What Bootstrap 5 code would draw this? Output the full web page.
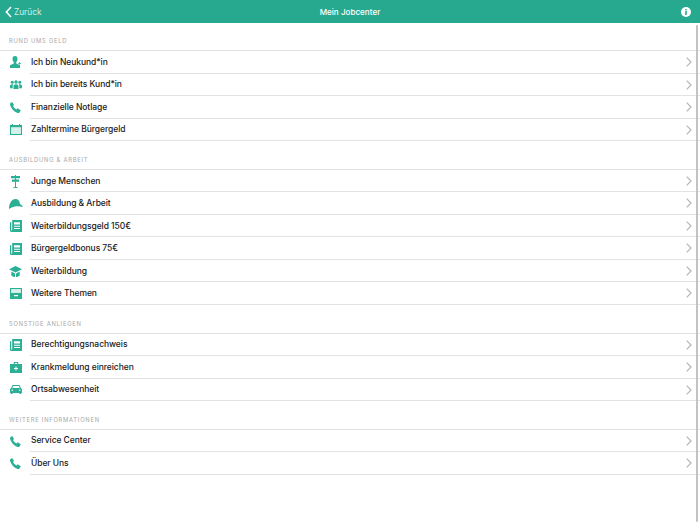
<!DOCTYPE html>
<html lang="de">
<head>
<meta charset="utf-8">
<title>Mein Jobcenter</title>
<link href="https://cdn.jsdelivr.net/npm/bootstrap@5.3.0/dist/css/bootstrap.min.css" rel="stylesheet">
<style>
html,body{height:100%;overflow:hidden;background:#fff}
body{font-family:Inter,"Liberation Sans",sans-serif;color:#222}
.appbar{height:23px;background:#26a98f;color:#fff}
.appbar svg{display:block}
.back-link{color:#d5efe9;font-size:8.3px;gap:2px;padding-left:5px;text-decoration:none}
.bar-title{color:#fff;font-size:8.1px;padding-top:1px;font-weight:500}
.back-text{padding-top:1px}
.bar-side{width:100px}
.info-side{padding-right:9px}
.app-body{height:502px;overflow:hidden}
.scroll-thumb{position:absolute;right:2px;top:2px;width:2px;height:497px;background:#c2c2c2;border-radius:1px}
.sect-head{height:27.7px;padding:0 0 4.100px 9px;font-size:5.800px;letter-spacing:.75px;color:#a8a8a8;text-transform:uppercase;display:flex;align-items:flex-end}
.sect-first{height:27.200px}
.rows{border-top:1px solid #e2e2e2}
.menu-row{height:22.5px;font-size:8.5px;color:#1a1a1a;text-decoration:none;display:flex;align-items:center;font-weight:500;letter-spacing:-.06px}
.row-icon{width:30px;flex:none;display:flex;justify-content:center;padding-left:1px}
.row-body{flex:1;height:100%;display:flex;align-items:center;justify-content:space-between;border-bottom:1px solid #e2e2e2;padding:.6px 8px 0 1px;min-width:0}
.row-icon svg{fill:#2bb096;display:block}
.chev{fill:none;stroke:#b5b5b5;stroke-width:1.2}
</style>
</head>
<body>
<svg width="0" height="0" class="position-absolute">
  <defs>
    <symbol id="ic-phone" viewBox="0 0 11 11"><path d="M.3 1.300 2.100 0l2 3-1.100 1c.7 1.500 2 2.800 3.500 3.400l1-1.100 3.300 2-1.300 2.100C9 11 8 11.100 7 10.700 3.700 9.500 1.200 6.500.2 3.300 0 2.500 0 1.900.3 1.300z"/></symbol>
    <symbol id="ic-doc" viewBox="0 0 12 12"><path fill-rule="evenodd" d="M2.200 0H12v12H1.200C.5 12 0 11.500 0 10.800V2.200h1.200v8.300h1zM4 2.200v2.400h6V2.200zM4 5.800v.9h6v-.9zM4 8v.9h6V8z"/></symbol>
    <symbol id="ic-chev" viewBox="0 0 6 10"><path class="chev" d="M.7.7 5 5 .7 9.300"/></symbol>
  </defs>
</svg>
<div class="appbar d-flex align-items-center justify-content-between">
  <a class="back-link bar-side d-flex align-items-center" href="#"><svg width="7" height="12" viewBox="0 0 7 12"><path d="M6 1 1.400 6 6 11" fill="none" stroke="#fff" stroke-width="1.600"/></svg><span class="back-text">Zurück</span></a>
  <div class="bar-title">Mein Jobcenter</div>
  <div class="bar-side info-side d-flex justify-content-end"><svg width="10" height="10" viewBox="0 0 10 10"><circle cx="5" cy="5" r="5" fill="#fff"/><path d="M4.200 2h1.600v1.300H4.200zM4.200 4.100h1.600v4H4.200z" fill="#26a98f"/></svg></div>
</div>
<div class="app-body position-relative">
<div class="scroll-thumb"></div>

<div class="sect-head sect-first">Rund ums Geld</div>
<div class="rows">
  <a class="menu-row" href="#"><span class="row-icon"><svg width="11" height="12" viewBox="0 0 11 12"><path d="M5 0C3.200 0 2.500 1.300 2.500 2.900c0 1.400.7 2.600 1.300 3.200v1.300L0 9.200V12h10V9.200L6.200 7.400V6.100C6.800 5.500 7.500 4.300 7.500 2.900 7.500 1.300 6.800 0 5 0z"/><path d="M9.300 6h.7v1h1v.7h-1v1h-.7v-1h-1V7h1z"/></svg></span><span class="row-body"><span>Ich bin Neukund*in</span><svg width="6" height="10"><use href="#ic-chev"/></svg></span></a>
  <a class="menu-row" href="#"><span class="row-icon"><svg width="12" height="9" viewBox="0 0 12 9"><circle cx="6" cy="2" r="1.700"/><circle cx="2.200" cy="2.300" r="1.500"/><circle cx="9.800" cy="2.300" r="1.500"/><path d="M3.500 9V6.200C3.500 5 4.500 4.200 6 4.200S8.500 5 8.500 6.200V9zM0 8.200V6C0 4.900 1 4.200 2.200 4.200c.4 0 .7 0 1 .2-.3.500-.5 1-.5 1.700v2.100zM12 8.200V6c0-1.100-1-1.800-2.200-1.800-.4 0-.7 0-1 .2.300.5.500 1 .5 1.700v2.100z"/></svg></span><span class="row-body"><span>Ich bin bereits Kund*in</span><svg width="6" height="10"><use href="#ic-chev"/></svg></span></a>
  <a class="menu-row" href="#"><span class="row-icon"><svg width="11" height="11"><use href="#ic-phone"/></svg></span><span class="row-body"><span>Finanzielle Notlage</span><svg width="6" height="10"><use href="#ic-chev"/></svg></span></a>
  <a class="menu-row" href="#"><span class="row-icon"><svg width="12" height="11" viewBox="0 0 12 11"><path fill-rule="evenodd" d="M0 1h2V0h1v1h6V0h1v1h2v10H0zM1.300 3.400V9.700h9.400V3.400z"/><rect x="1.300" y="3.400" width="9.400" height="6.300" fill="#d6f0ea"/></svg></span><span class="row-body"><span>Zahltermine Bürgergeld</span><svg width="6" height="10"><use href="#ic-chev"/></svg></span></a>
</div>

<div class="sect-head">Ausbildung &amp; Arbeit</div>
<div class="rows">
  <a class="menu-row" href="#"><span class="row-icon"><svg width="9" height="13" viewBox="0 0 9 13"><path d="M0 1h9v2.300H0zM1 4.500h7v2.300H1zM4 0h1v1H4zM4 3.300h1v1.200H4zM4 6.800h1v5.400H4zM2.500 12h4v1h-4z"/></svg></span><span class="row-body"><span>Junge Menschen</span><svg width="6" height="10"><use href="#ic-chev"/></svg></span></a>
  <a class="menu-row" href="#"><span class="row-icon"><svg width="14" height="10" viewBox="0 0 14 10"><path d="M0 10C0 4.500 2.500 0 6.500 0 9 0 10.500 1.800 11 5c1.200.5 2.300 1.500 3 3-3-.8-6-.9-8-.4C3.500 8.100 1.500 9 0 10z"/></svg></span><span class="row-body"><span>Ausbildung &amp; Arbeit</span><svg width="6" height="10"><use href="#ic-chev"/></svg></span></a>
  <a class="menu-row" href="#"><span class="row-icon"><svg width="12" height="12"><use href="#ic-doc"/></svg></span><span class="row-body"><span>Weiterbildungsgeld 150€</span><svg width="6" height="10"><use href="#ic-chev"/></svg></span></a>
  <a class="menu-row" href="#"><span class="row-icon"><svg width="12" height="12"><use href="#ic-doc"/></svg></span><span class="row-body"><span>Bürgergeldbonus 75€</span><svg width="6" height="10"><use href="#ic-chev"/></svg></span></a>
  <a class="menu-row" href="#"><span class="row-icon"><svg width="13" height="11" viewBox="0 0 13 11"><path d="M6.500 0 13 3.200 6.500 6.400 0 3.200z"/><path d="M2.300 5.600 6 7.400V11C4.500 10.800 3.100 10.200 2.300 9.400zM10.700 5.600 7 7.400V11c1.500-.2 2.900-.8 3.700-1.600z"/></svg></span><span class="row-body"><span>Weiterbildung</span><svg width="6" height="10"><use href="#ic-chev"/></svg></span></a>
  <a class="menu-row" href="#"><span class="row-icon"><svg width="12" height="11" viewBox="0 0 12 11"><path fill-rule="evenodd" d="M0 0h12v11H0zM1.300 1.300v3.400h9.400V1.300zM4 7v1.200h4V7z"/><rect x="1.300" y="1.300" width="9.400" height="3.400" fill="#d6f0ea"/></svg></span><span class="row-body"><span>Weitere Themen</span><svg width="6" height="10"><use href="#ic-chev"/></svg></span></a>
</div>

<div class="sect-head">Sonstige Anliegen</div>
<div class="rows">
  <a class="menu-row" href="#"><span class="row-icon"><svg width="12" height="12"><use href="#ic-doc"/></svg></span><span class="row-body"><span>Berechtigungsnachweis</span><svg width="6" height="10"><use href="#ic-chev"/></svg></span></a>
  <a class="menu-row" href="#"><span class="row-icon"><svg width="12" height="11" viewBox="0 0 12 11"><path fill-rule="evenodd" d="M3.800 0h4.400v2H12v9H0V2h3.800zM4.800 1v1h2.400V1zM5.500 4.500V6H4v1h1.500v1.500h1V7H8V6H6.500V4.500z"/></svg></span><span class="row-body"><span>Krankmeldung einreichen</span><svg width="6" height="10"><use href="#ic-chev"/></svg></span></a>
  <a class="menu-row" href="#"><span class="row-icon"><svg width="12" height="9" viewBox="0 0 12 9"><path fill-rule="evenodd" d="M2.500 0h7L11 3.200c.6.300 1 .8 1 1.500V8h-.8v1H9.500V8h-7v1H.8V8H0V4.700c0-.7.400-1.200 1-1.500zM3.200 1 2.200 3h7.600l-1-2zM2.200 4.500a.8.800 0 1 0 0 1.600.8.800 0 0 0 0-1.600zM9.800 4.500a.8.800 0 1 0 0 1.600.8.800 0 0 0 0-1.600z"/></svg></span><span class="row-body"><span>Ortsabwesenheit</span><svg width="6" height="10"><use href="#ic-chev"/></svg></span></a>
</div>

<div class="sect-head">Weitere Informationen</div>
<div class="rows">
  <a class="menu-row" href="#"><span class="row-icon"><svg width="11" height="11"><use href="#ic-phone"/></svg></span><span class="row-body"><span>Service Center</span><svg width="6" height="10"><use href="#ic-chev"/></svg></span></a>
  <a class="menu-row" href="#"><span class="row-icon"><svg width="11" height="11"><use href="#ic-phone"/></svg></span><span class="row-body"><span>Über Uns</span><svg width="6" height="10"><use href="#ic-chev"/></svg></span></a>
</div>
</div>
<script src="https://cdn.jsdelivr.net/npm/bootstrap@5.3.0/dist/js/bootstrap.bundle.min.js"></script>
</body>
</html>
